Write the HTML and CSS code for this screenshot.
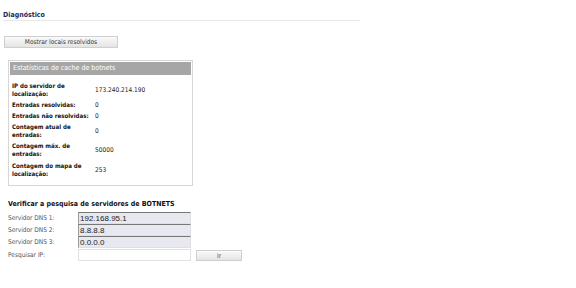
FILE: index.html
```html
<!DOCTYPE html>
<html lang="pt">
  <head>
    <meta charset="UTF-8" />
    <title>Diagnóstico</title>
    <link rel="stylesheet" href="styles.css">
  </head>
  <body>
    <div class="page">
      <h2 class="title">Diagnóstico</h2>

      <button class="btn btn-wide">Mostrar locais resolvidos</button>

      <div class="stats">
        <div class="stats-head">Estatísticas de cache de botnets</div>
        <table class="stats-table">
          <tr>
            <th>IP do servidor de localização:</th>
            <td>173.240.214.190</td>
          </tr>
          <tr>
            <th>Entradas resolvidas:</th>
            <td>0</td>
          </tr>
          <tr>
            <th>Entradas não resolvidas:</th>
            <td>0</td>
          </tr>
          <tr>
            <th>Contagem atual de entradas:</th>
            <td>0</td>
          </tr>
          <tr>
            <th>Contagem máx. de entradas:</th>
            <td>50000</td>
          </tr>
          <tr>
            <th>Contagem do mapa de localização:</th>
            <td>253</td>
          </tr>
        </table>
      </div>

      <h3 class="subtitle">Verificar a pesquisa de servidores de BOTNETS</h3>
      <div class="dns-form">
        <label>Servidor DNS 1:</label>
        <input class="field readonly" type="text" value="192.168.95.1" readonly />
        <span></span>
        <label>Servidor DNS 2:</label>
        <input class="field readonly" type="text" value="8.8.8.8" readonly />
        <span></span>
        <label>Servidor DNS 3:</label>
        <input class="field readonly" type="text" value="0.0.0.0" readonly />
        <span></span>
        <label>Pesquisar IP:</label>
        <input class="field" type="text" value="" />
        <button class="btn btn-go">Ir</button>
      </div>
    </div>
  </body>
</html>
```

FILE: styles.css
```css
body {
  margin: 0;
  background-color: white;
  font-family: "DejaVu Sans Condensed", "DejaVu Sans", Verdana, sans-serif;
  font-size: 7px;
  color: #222;
}

.page {
  padding: 11px 0 0 3px;
}

.title {
  margin: 0;
  width: 357px;
  font-size: 7px;
  font-weight: bold;
  color: #1c2a55;
  padding-bottom: 1px;
  border-bottom: 1px solid #e8e8e8;
}

.btn {
  display: block;
  font-family: "DejaVu Sans Condensed", "DejaVu Sans", Verdana, sans-serif;
  font-size: 6.5px;
  color: #333;
  background: linear-gradient(#fafafa, #e4e4e4);
  border: 1px solid #cfcfcf;
  padding: 0;
  cursor: pointer;
}

.btn-wide {
  margin: 15px 0 0 1px;
  width: 114px;
  height: 12px;
}

.stats {
  margin: 12px 0 0 5px;
  width: 183px;
  border: 1px solid #d6d6d6;
  padding: 1px 0 6px 0;
}

.stats-head {
  background-color: #a6a6a6;
  color: white;
  font-size: 7px;
  height: 13px;
  line-height: 13px;
  padding-left: 3px;
  margin: 0 1px;
}

.stats-table {
  border-collapse: collapse;
  margin: 5px 0 0 3px;
}

.stats-table th {
  width: 80px;
  text-align: left;
  font-weight: bold;
  color: #111;
  font-size: 6.1px;
  line-height: 8px;
  padding: 1.6px 3px 1.6px 0;
}

.stats-table td {
  font-size: 6.5px;
  color: #222;
  padding: 0;
}

.subtitle {
  margin: 14px 0 0 5px;
  font-size: 7px;
  font-weight: bold;
  color: #111;
}

.dns-form {
  display: grid;
  grid-template-columns: 70px 113px auto;
  align-items: center;
  margin: 4px 0 0 5px;
}

.dns-form label {
  color: #555;
  font-size: 6.5px;
}

.field {
  box-sizing: border-box;
  width: 113px;
  height: 12px;
  font-family: "Liberation Sans", Arial, sans-serif;
  font-size: 8px;
  padding: 0 1px;
  margin: 0;
  border: 1px solid #e0e0e0;
  background: white;
  color: #222;
}

.field.readonly {
  background-color: #e8e8f0;
  border-top: 1px solid #777;
  border-left: 1px solid #999;
}

.btn-go {
  margin: 2px 0 0 5px;
  width: 46px;
  height: 11px;
  color: #555;
}
```
